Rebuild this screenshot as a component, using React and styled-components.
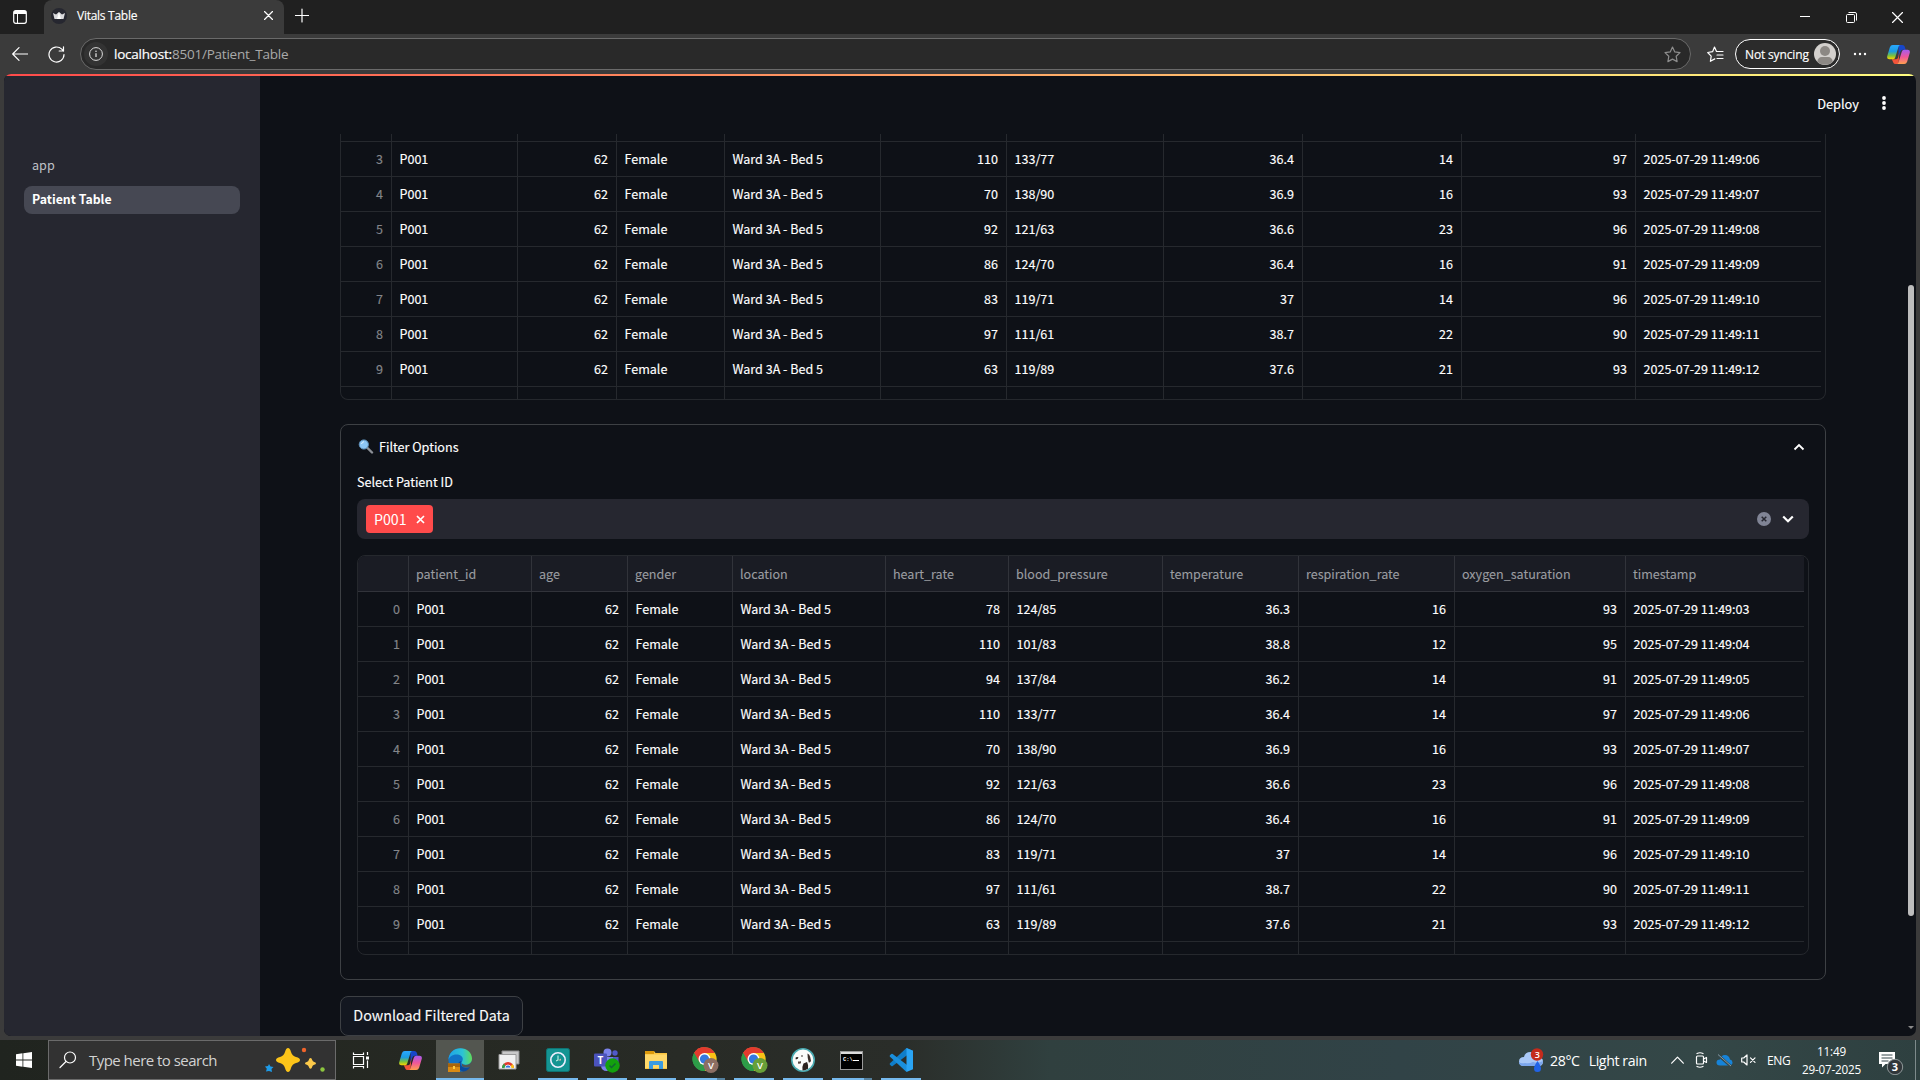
import React from "react";
import styled, { createGlobalStyle } from "styled-components";

const source = '"Noto Sans CJK SC", "Noto Sans CJK JP", "Open Sans", sans-serif';
const segoe = '"Open Sans", "Noto Sans", sans-serif';

const Global = createGlobalStyle`
  *, *::before, *::after { box-sizing: border-box; }
  html, body { margin: 0; padding: 0; background: #3b3b3b; overflow: hidden; }
  svg { display: block; flex: none; }
`;

const Screen = styled.div`
  width: 1920px;
  height: 1080px;
  display: flex;
  flex-direction: column;
  background: #3b3b3b;
  color: #fff;
  font-family: ${segoe};
  overflow: hidden;
`;

/* Browser chrome */
const TitleBar = styled.header`
  height: 34px;
  flex: none;
  display: flex;
  align-items: stretch;
  background: #202020;
`;
const IconBox = styled.div`
  width: ${(p) => p.$w}px;
  display: flex;
  align-items: center;
  justify-content: ${(p) => p.$align || "center"};
  flex: none;
`;
const Tab = styled.div`
  width: 240px;
  display: flex;
  align-items: center;
  padding: 0 8px 3px 7px;
  background: #3b3b3b;
  border-radius: 8px 8px 0 0;
  font-size: 12px;
`;
const TabTitle = styled.span`
  flex: 1;
  padding-left: 10px;
  letter-spacing: -0.27px;
  white-space: nowrap;
  -webkit-text-stroke: 0.15px currentColor;
`;
const Spacer = styled.div`
  flex: 1;
`;
const Toolbar = styled.div`
  height: 40px;
  flex: none;
  display: flex;
  align-items: center;
  padding-right: 5px;
`;
const AddressBar = styled.div`
  width: 1611px;
  height: 32px;
  flex: none;
  display: flex;
  align-items: center;
  padding: 0 9px 0 3px;
  background: #292929;
  border: 1px solid #6a6a6a;
  border-radius: 16px;
`;
const InfoDot = styled.div`
  width: 24px;
  height: 24px;
  border-radius: 50%;
  background: #333;
  display: flex;
  align-items: center;
  justify-content: center;
  margin-right: 6px;
`;
const Url = styled.div`
  flex: 1;
  color: #a9a9a9;
  font-size: 13.5px;
  letter-spacing: -0.22px;
  white-space: nowrap;
`;
const Host = styled.span`
  color: #fff;
  -webkit-text-stroke: 0.2px currentColor;
`;
const Profile = styled.div`
  width: 105px;
  height: 30px;
  flex: none;
  margin-left: 4px;
  border: 1px solid #fff;
  border-radius: 15px;
  background: #2b2b2b;
  display: flex;
  align-items: center;
  justify-content: space-between;
  padding: 0 3px 0 9px;
  font-size: 12px;
  letter-spacing: -0.15px;
  white-space: nowrap;
  -webkit-text-stroke: 0.15px currentColor;
`;

/* Web page */
const Viewport = styled.div`
  height: 962px;
  flex: none;
  margin: 0 4px 4px;
  display: flex;
  flex-direction: column;
  border-radius: 7px;
  overflow: hidden;
  background: #0e1117;
  font-family: ${source};
`;
const Decoration = styled.div`
  height: 2px;
  flex: none;
  background: linear-gradient(90deg, #ff4b4b, #fffd80);
`;
const Page = styled.div`
  flex: 1;
  min-height: 0;
  display: flex;
`;
const Sidebar = styled.nav`
  width: 256px;
  flex: none;
  background: #262730;
  padding: 74px 20px 0;
  display: flex;
  flex-direction: column;
  gap: 8px;
`;
const NavItem = styled.a`
  height: 28px;
  padding: 0 8px ${(p) => (p.$active ? 2 : 0)}px;
  border-radius: 8px;
  display: flex;
  align-items: center;
  font-size: ${(p) => (p.$active ? 12.3 : 12.6)}px;
  font-weight: ${(p) => (p.$active ? 700 : 400)};
  color: ${(p) => (p.$active ? "#fff" : "#bfc0c5")};
  background: ${(p) => (p.$active ? "#464853" : "transparent")};
`;
const Main = styled.main`
  flex: 1;
  min-width: 0;
  display: flex;
  flex-direction: column;
`;
const AppHeader = styled.div`
  height: 58px;
  flex: none;
  display: flex;
  align-items: center;
  justify-content: flex-end;
  padding: 0 16px 4px 0;
  gap: 19px;
  font-size: 12.8px;
  -webkit-text-stroke: 0.15px currentColor;
`;
const Content = styled.div`
  flex: 1;
  min-height: 0;
  width: 1486px;
  margin-left: 80px;
  overflow: hidden;
  display: flex;
  flex-direction: column;
  align-items: flex-start;
`;
const ScrollTrack = styled.div`
  width: 10px;
  flex: none;
  padding-top: 209px;
  display: flex;
  flex-direction: column;
  align-items: center;
`;
const ScrollThumb = styled.div`
  width: 6px;
  height: 631px;
  border-radius: 3px;
  background: #bdbdbd;
`;
const ScrollArrow = styled.div`
  margin-top: 110px;
  border: 3px solid transparent;
  border-top: 3px solid #8a8a8a;
  border-bottom: 0;
`;

/* Data grid */
const Grid = styled.div`
  width: ${(p) => p.$width}px;
  height: ${(p) => p.$height}px;
  flex: none;
  overflow: hidden;
  border: 1px solid #25282d;
  border-top-width: ${(p) => (p.$clipped ? 0 : 1)}px;
  border-radius: ${(p) => (p.$clipped ? "0 0 8px 8px" : "8px")};
  padding-right: 4px;
  font-size: 12.55px;
`;
const Row = styled.div`
  display: grid;
  grid-template-columns: ${(p) => p.$cols};
  height: ${(p) => p.$h || 35}px;
`;
const Cell = styled.div`
  display: flex;
  align-items: center;
  justify-content: ${(p) => (p.$right ? "flex-end" : "flex-start")};
  padding: ${(p) => (p.$head ? "2px 8px 0 7px" : "0 8px 0 7.5px")};
  border-right: ${(p) => (p.$last ? 0 : 1)}px solid ${(p) => (p.$head ? "#31333a" : "#26292e")};
  border-bottom: 1px solid ${(p) => (p.$head ? "#31333a" : "#26292e")};
  color: ${(p) => (p.$head ? "#9b9ca1" : p.$index ? "#84868a" : "#fff")};
  background: ${(p) => (p.$head ? "#1a1c24" : "transparent")};
  line-height: 1;
  white-space: nowrap;
  overflow: hidden;
  -webkit-text-stroke: ${(p) => (p.$head ? 0.1 : 0.15)}px currentColor;
`;

const Expander = styled.section`
  width: 1486px;
  height: 556px;
  flex: none;
  margin-top: 24px;
  border: 1px solid #3d4044;
  border-radius: 8px;
  padding: 0 16px;
`;
const Summary = styled.div`
  height: 46px;
  display: flex;
  align-items: center;
  padding: 0 4px 3px 1px;
  gap: 5px;
  font-size: 12.6px;
  -webkit-text-stroke: 0.15px currentColor;
`;
const Label = styled.div`
  height: 28px;
  display: flex;
  align-items: flex-start;
  font-size: 12.6px;
  line-height: 21px;
  -webkit-text-stroke: 0.15px currentColor;
`;
const Select = styled.div`
  height: 40px;
  margin-bottom: 16px;
  border-radius: 8px;
  background: #262730;
  display: flex;
  align-items: center;
  padding: 0 15px 0 9px;
`;
const Tag = styled.div`
  width: 67px;
  height: 28px;
  border-radius: 4px;
  background: #ff4b4b;
  display: flex;
  align-items: center;
  justify-content: space-between;
  padding: 0 8px;
  font-size: 14.2px;
`;
const Download = styled.button`
  width: 183px;
  height: 40px;
  flex: none;
  margin-top: 16px;
  padding: 0 0 3px;
  border: 1px solid #3d4044;
  border-radius: 8px;
  background: #131720;
  color: #fafafa;
  font-family: inherit;
  font-size: 14.3px;
  -webkit-text-stroke: 0.12px currentColor;
`;

/* Taskbar */
const Taskbar = styled.footer`
  height: 40px;
  flex: none;
  display: flex;
  align-items: stretch;
  background: linear-gradient(90deg, #20241f 0, #262923 460px, #2a2d29 900px, #30403f 1050px, #314347 1400px, #344747 1700px, #2e4040 1920px);
`;
const SearchBox = styled.div`
  width: 288px;
  flex: none;
  border: 1px solid #6b6b6b;
  background: #323232;
  display: flex;
  align-items: center;
  padding: 0 9px 0 10px;
  gap: 12px;
  font-size: 15px;
  color: #d2d2d2;
`;
const SearchText = styled.span`
  flex: 1;
  letter-spacing: -0.53px;
  white-space: nowrap;
`;
const Task = styled.div`
  width: ${(p) => (p.$active ? 48 : 49)}px;
  flex: none;
  display: flex;
  align-items: center;
  justify-content: center;
  background: ${(p) => (p.$active ? "#535650" : "transparent")};
  box-shadow: ${(p) => (p.$active ? "inset 0 -2px #76b9ed" : "none")};
`;
const Running = styled.div`
  width: 40px;
  height: 40px;
  display: flex;
  align-items: center;
  justify-content: center;
  border-bottom: 2px solid transparent;
  border-image: ${(p) =>
    p.$stack
      ? "linear-gradient(90deg, #76b9ed 31px, #55819f 31px) 2"
      : p.$on
      ? "linear-gradient(#76b9ed, #76b9ed) 2"
      : "none"};
  padding-top: 2px;
`;
const Weather = styled.div`
  display: flex;
  align-items: center;
  gap: 6px;
  font-size: 14.2px;
  letter-spacing: -0.4px;
  white-space: nowrap;
  width: 152px;
`;
const WeatherText = styled.span`
  display: flex;
  gap: 9px;
`;
const TrayIcons = styled.div`
  display: flex;
  align-items: center;
  gap: 8px;
  width: 96px;
`;
const Lang = styled.div`
  display: flex;
  align-items: center;
  width: 34px;
  font-size: 12px;
  letter-spacing: -0.4px;
`;
const Clock = styled.div`
  width: 60px;
  display: flex;
  flex-direction: column;
  align-items: center;
  justify-content: center;
  padding-left: 1px;
  font-size: 11.7px;
  line-height: 18px;
  letter-spacing: -0.2px;
  white-space: nowrap;
`;
const Notify = styled.div`
  width: 54px;
  display: flex;
  align-items: center;
  padding: 3px 0 0 17px;
`;
const DesktopEdge = styled.div`
  width: 5px;
  border-left: 1px solid #7d8a8b;
`;

const stroke = { fill: "none", stroke: "#fff", strokeWidth: 1.2, strokeLinecap: "round", strokeLinejoin: "round" };

const CopilotIcon = ({ size = 22, id }) => (
  <svg width={size} height={size} viewBox="0 0 24 24">
    <defs>
      <linearGradient id={id + "a"} x1="0" y1="0" x2="0" y2="1">
        <stop offset="0" stopColor="#2aa8ff" />
        <stop offset=".45" stopColor="#1b9de0" />
        <stop offset=".75" stopColor="#7bc23c" />
        <stop offset="1" stopColor="#ffd400" />
      </linearGradient>
      <linearGradient id={id + "b"} x1="0" y1="0" x2="0" y2="1">
        <stop offset="0" stopColor="#a45cf0" />
        <stop offset=".5" stopColor="#f0569a" />
        <stop offset="1" stopColor="#ffa04d" />
      </linearGradient>
    </defs>
    <path d="M12 2h4q2 0 2.600 2L19.500 7h-3q-2 0-2.600 2L12 14z" fill="#1746c9" />
    <path d="M12 22H9q-2 0-2.600-2L5 17h4q2 0 2.600-2L13 9z" fill="#f2543a" />
    <path d="M6 2h8q-1.500 0-2 2L8.600 15q-.6 2-2.600 2H2.500Q-.6 17 .3 13.500L3 4.500Q3.800 2 6 2z" fill={`url(#${id}a)`} />
    <path d="M18 22h-8q1.500 0 2-2l3.400-11q.6-2 2.600-2h3.500q3.100 0 2.200 3.500L21 19.500q-.8 2.500-3 2.500z" fill={`url(#${id}b)`} />
  </svg>
);

const EdgeIcon = () => (
  <svg width="24" height="24" viewBox="0 0 24 24">
    <defs>
      <linearGradient id="edgeTop" x1="0" x2="1">
        <stop offset="0" stopColor="#1fa3e8" />
        <stop offset=".6" stopColor="#2cc3d5" />
        <stop offset="1" stopColor="#5fdc5a" />
      </linearGradient>
    </defs>
    <circle cx="12" cy="12" r="11.500" fill="#1173c7" />
    <path d="M.5 12C.5 5 6 .3 12.500.3 19 .3 24 5 24 10.500c0 4-3 6.300-6.500 6.300-2.700 0-4-1-4-2.200 0-1 1.300-1.500 1.300-3.600C14.800 8.500 12 6.500 8.500 6.500 4 6.500 1 9 .5 12z" fill="url(#edgeTop)" />
    <path d="M13.500 13q-2 3 .5 5.500 3 2.500 8 .5-3 4.500-7 4.500-5-1.500-5-6.500 0-3.500 3.500-4z" fill="#0b4a9c" />
    <path d="M14 13.500q-.8 3.300 3.500 3.500 4.500 0 6-3.500l1 3-3 2.500q-5 1.500-7.500-1z" fill="#535650" />
    <path d="M0 15.500h12v8.500H0z" fill="#d98a14" />
    <path d="M0 15.500h12v3.500H0z" fill="#a8640c" />
    <path d="M5 18h2v3H5z" fill="#ffc93c" />
  </svg>
);

const ChromeMark = () => (
  <g transform="translate(1 1)">
    <circle cx="12" cy="12" r="12" fill="#34a04a" />
    <path d="M1.600 6A12 12 0 0 1 22.400 6H12z" fill="#e33b2e" />
    <path d="M1.600 6A12 12 0 0 1 12 0l2 6-6.500 10.500z" fill="#e33b2e" />
    <path d="M12 6h10.400A12 12 0 0 1 12 24l5.200-9z" fill="#fbc116" />
    <path d="M1.600 6L6.800 15l5.200 3 2 3-2 3A12 12 0 0 1 1.600 6z" fill="#2d9c48" />
    <circle cx="12" cy="12" r="6" fill="#fff" />
    <circle cx="12" cy="12" r="4.600" fill="#3478e0" />
  </g>
);

const ChromeProfile = ({ color }) => (
  <svg width="28" height="28" viewBox="-0.5 0 28 28">
    <ChromeMark />
    <circle cx="19.500" cy="19.500" r="7.500" fill={color} />
    <text x="19.500" y="23" textAnchor="middle" fontSize="9.500" fontWeight="600" fill="#fff" fontFamily="Open Sans">V</text>
  </svg>
);

const COLS_A = "51px 126px 99px 108px 156px 126px 157px 139px 159px 174px 185px";
const COLS_B = "51px 123px 96px 105px 153px 123px 154px 136px 156px 171px 178px";

const HEADERS = ["", "patient_id", "age", "gender", "location", "heart_rate", "blood_pressure", "temperature", "respiration_rate", "oxygen_saturation", "timestamp"];
const VITALS = [
  [78, "124/85", "36.3", 16, 93],
  [110, "101/83", "38.8", 12, 95],
  [94, "137/84", "36.2", 14, 91],
  [110, "133/77", "36.4", 14, 97],
  [70, "138/90", "36.9", 16, 93],
  [92, "121/63", "36.6", 23, 96],
  [86, "124/70", "36.4", 16, 91],
  [83, "119/71", "37", 14, 96],
  [97, "111/61", "38.7", 22, 90],
  [63, "119/89", "37.6", 21, 93],
];
const ROWS = VITALS.map(([hr, bp, t, rr, ox], i) => [
  i, "P001", 62, "Female", "Ward 3A - Bed 5", hr, bp, t, rr, ox,
  `2025-07-29 11:49:${String(i + 3).padStart(2, "0")}`,
]);
const RIGHT = new Set([0, 2, 5, 7, 8, 9]);

const GridRow = ({ values, cols, h, head }) => (
  <Row $cols={cols} $h={h}>
    {values.map((v, i) => (
      <Cell key={i} $right={!head && RIGHT.has(i)} $index={i === 0} $head={head} $last={i === 10}>
        {v}
      </Cell>
    ))}
  </Row>
);
const EMPTY = HEADERS.map(() => "");

const TASKS = [
  {
    id: "remote",
    icon: (
      <svg width="22" height="20" viewBox="0 0 22 20">
        <path d="M4 1h17v13H4z" fill="#c9c9c9" stroke="#8a8a8a" />
        <path d="M1 4.500h17V19H1z" fill="#f1f1f1" stroke="#9b9b9b" />
        <path d="M4 18a6 6 0 0 1 12 0z" fill="#e33b2e" />
        <path d="M4 18a6 6 0 0 1 2-4.500L9 18z" fill="#34a04a" />
        <path d="M16 18a6 6 0 0 0-1.500-4L11 18z" fill="#fbc116" />
        <path d="M7 18a3 3 0 0 1 6 0z" fill="#3478e0" stroke="#fff" strokeWidth=".8" />
      </svg>
    ),
  },
  {
    id: "timer",
    on: true,
    icon: (
      <svg width="24" height="24" viewBox="0 0 24 24">
        <rect x=".5" y=".5" width="23" height="23" rx="2" fill="#149493" stroke="#0e7473" />
        <circle cx="12" cy="12" r="7.200" fill="none" stroke="#eef" strokeWidth="1.600" />
        <path d="M12 7.500V12l-2 1" fill="none" stroke="#cfe" strokeWidth="1" />
        <path d="M12 12.500h3v-2z" fill="#e6b8a8" />
      </svg>
    ),
  },
  {
    id: "teams",
    on: true,
    icon: (
      <svg width="26" height="25" viewBox="0 0 26 25">
        <circle cx="13.500" cy="4.500" r="4" fill="#7b83eb" />
        <circle cx="21" cy="5" r="2.700" fill="#5059c9" />
        <path d="M16 9h8.500v6q0 5-5 5H16z" fill="#5059c9" />
        <path d="M7 9h12v8q0 6-6 6t-6-6z" fill="#7b83eb" />
        <rect x="0" y="5.500" width="13" height="13" rx="1" fill="#4b53bc" />
        <text x="6.500" y="15.500" textAnchor="middle" fontSize="10" fontWeight="700" fill="#fff" fontFamily="Open Sans">T</text>
        <circle cx="18.500" cy="17.500" r="7.200" fill="#13a10e" />
        <path d="M15.500 17.500l2 2 4-4" fill="none" stroke="#163" strokeWidth="1.500" />
      </svg>
    ),
  },
  {
    id: "files",
    on: true,
    icon: (
      <svg width="22" height="20" viewBox="0 0 22 20">
        <path d="M0 1h9l1.500 2H22v16H0z" fill="#f9c440" />
        <path d="M0 1h9v3H0z" fill="#dd9a0c" />
        <path d="M0 4.500h22V18H0z" fill="#ffd869" />
        <path d="M4 19v-7q0-1 1-1h12q1 0 1 1v7h-4v-4H8v4z" fill="#3c9be0" />
      </svg>
    ),
  },
  { id: "chrome1", on: true, stack: true, icon: <ChromeProfile color="#8d6e63" /> },
  { id: "chrome2", on: true, icon: <ChromeProfile color="#689f38" /> },
  {
    id: "dbeaver",
    on: true,
    icon: (
      <svg width="24" height="24" viewBox="0 0 24 24">
        <circle cx="12" cy="12" r="11.200" fill="#fbfbfa" stroke="#48a9b0" strokeWidth="1.600" />
        <path d="M16.500 5.500q2 .5 2.700 3.500l.8 4q-1 2-2.300 1.200Q16.500 11 16.500 5.500z" fill="#3a2d28" />
        <path d="M12.500 15.500l3.500-1.500q1.800 3 1 6.800-2.500 1.700-5.500 1.600-.8-3 1-6.900z" fill="#2b211e" />
        <path d="M4.500 9.800q1.500-1.300 3-.3-.2 1.800-2.700 1.900z" fill="#2b211e" />
        <path d="M7 13.500q1.800.3 3-.5v2.200q-1.500.8-3 .3z" fill="#5a4a44" />
        <circle cx="11" cy="8" r=".8" fill="#2b211e" />
      </svg>
    ),
  },
  {
    id: "terminal",
    on: true,
    stack: true,
    icon: (
      <svg width="23" height="19" viewBox="0 0 23 19">
        <rect x=".5" y=".5" width="22" height="18" fill="#000" stroke="#9a9a9a" />
        <path d="M1 1h21v2H1z" fill="#dcdcdc" />
        <text x="3" y="9.500" fontSize="5.500" fontWeight="700" fill="#fff" fontFamily="Liberation Mono">C:\</text>
        <path d="M13 9.500h6" stroke="#fff" />
      </svg>
    ),
  },
  {
    id: "code",
    on: true,
    icon: (
      <svg width="24" height="24" viewBox="0 0 24 24">
        <path d="M17.500 0L1 15.300q-.7.700 0 1.500l1.300 1.200q.7.500 1.400 0L24 2.800z" fill="#0f7dc9" />
        <path d="M17.500 24L1 8.700q-.7-.7 0-1.500L2.300 6q.7-.5 1.400 0L20 18.500z" fill="#1a8fdd" />
        <path d="M17.500 0L24 2.800v18.400L17.500 24z" fill="#2aa4f4" />
      </svg>
    ),
  },
];

export default function App() {
  return (
    <Screen>
      <Global />
      <TitleBar>
        <IconBox $w={40}>
          <svg width="14" height="14" viewBox="0 0 14 14">
            <rect x=".7" y=".7" width="12.600" height="12.600" rx="2" fill="none" stroke="#fff" strokeWidth="1.200" />
            <path d="M1 1h12v3H1z" fill="#fff" />
            <path d="M4.500 4v9" stroke="#fff" />
          </svg>
        </IconBox>
        <IconBox $w={4} />
        <Tab>
          <svg width="16" height="16" viewBox="0 0 16 16">
            <circle cx="8" cy="8" r="8" fill="#262730" />
            <path d="M2 5l3 1.500L8 4l3 2.500L14 5l-1.500 6h-9z" fill="#d9d9dc" />
            <path d="M8 4l2 7H6z" fill="#fff" />
          </svg>
          <TabTitle>Vitals Table</TabTitle>
          <IconBox $w={16}>
            <svg width="9" height="9" viewBox="0 0 9 9"><path d="M.5.5l8 8M8.500.5l-8 8" {...stroke} /></svg>
          </IconBox>
        </Tab>
        <IconBox $w={35}>
          <svg width="14" height="18" viewBox="0 0 14 18"><path d="M7 1v13M.5 7.500h13" {...stroke} /></svg>
        </IconBox>
        <Spacer />
        <IconBox $w={46}>
          <svg width="10" height="10" viewBox="0 0 10 10"><path d="M0 4.500h10" stroke="#fff" /></svg>
        </IconBox>
        <IconBox $w={46}>
          <svg width="11" height="11" viewBox="0 0 11 11">
            <rect x=".5" y="2.500" width="8" height="8" rx="1" fill="none" stroke="#fff" />
            <path d="M2.500.5H9Q10.500.5 10.500 2v6.500" fill="none" stroke="#fff" />
          </svg>
        </IconBox>
        <IconBox $w={46}>
          <svg width="11" height="11" viewBox="0 0 11 11"><path d="M.5.500l10 10M10.500.5l-10 10" {...stroke} /></svg>
        </IconBox>
      </TitleBar>

      <Toolbar>
        <IconBox $w={40}>
          <svg width="16" height="14" viewBox="0 0 16 14"><path d="M15.500 7H.7M7 .7L.7 7 7 13.300" {...stroke} /></svg>
        </IconBox>
        <IconBox $w={32}>
          <svg width="17" height="17" viewBox="0 0 17 17">
            <path d="M16 8.500a7.500 7.500 0 1 1-2.200-5.300L15.500 5M15.500.8V5h-4.300" {...stroke} />
          </svg>
        </IconBox>
        <IconBox $w={8} />
        <AddressBar>
          <InfoDot>
            <svg width="14" height="14" viewBox="0 0 14 14">
              <circle cx="7" cy="7" r="6.400" fill="none" stroke="#ddd" />
              <path d="M7 6.200V10" stroke="#ddd" strokeWidth="1.300" />
              <circle cx="7" cy="4.200" r=".8" fill="#ddd" />
            </svg>
          </InfoDot>
          <Url><Host>localhost:</Host>8501/Patient_Table</Url>
          <svg width="17" height="17" viewBox="0 0 17 17">
            <path d="M8.500 1l2.300 4.900 5.200.7-3.800 3.700.9 5.300-4.600-2.500-4.600 2.500.9-5.300L1 6.600l5.200-.7z" {...stroke} stroke="#8d8d8d" />
          </svg>
        </AddressBar>
        <IconBox $w={40} $align="flex-end">
          <svg width="24" height="17" viewBox="0 0 24 17">
            <path d="M9.500 5.500L7.500 1 5.600 5.700.7 6.500l3.500 3.600-.8 5.200 4.400-2.400M9.500 5.500H16M10 9h6M10 12.500h6" {...stroke} />
          </svg>
        </IconBox>
        <Profile>
          Not syncing
          <svg width="22" height="22" viewBox="0 0 22 22">
            <circle cx="11" cy="11" r="11" fill="#d3d0cd" />
            <circle cx="11" cy="8" r="5" fill="#8c8884" />
            <path d="M3.200 18.500q1-4.500 4.500-4.500h6.600q3.500 0 4.500 4.500A11 11 0 0 1 3.200 18.500z" fill="#8c8884" />
          </svg>
        </Profile>
        <IconBox $w={40}>
          <svg width="14" height="4" viewBox="0 0 14 4">
            <circle cx="2" cy="2" r="1.200" fill="#fff" /><circle cx="7" cy="2" r="1.200" fill="#fff" /><circle cx="12" cy="2" r="1.200" fill="#fff" />
          </svg>
        </IconBox>
        <IconBox $w={36}><CopilotIcon id="cpa" size={23} /></IconBox>
      </Toolbar>

      <Viewport>
        <Decoration />
        <Page>
          <Sidebar>
            <NavItem>app</NavItem>
            <NavItem $active>Patient Table</NavItem>
          </Sidebar>
          <Main>
            <AppHeader>
              Deploy
              <IconBox $w={12}>
                <svg width="4" height="14" viewBox="0 0 4 14">
                  <circle cx="2" cy="2" r="1.900" fill="#fff" /><circle cx="2" cy="7" r="1.900" fill="#fff" /><circle cx="2" cy="12" r="1.900" fill="#fff" />
                </svg>
              </IconBox>
            </AppHeader>
            <Content>
              <Grid $width={1486} $height={266} $clipped>
                <GridRow values={EMPTY} cols={COLS_A} h={8} />
                {ROWS.slice(3).map((r) => <GridRow key={r[0]} values={r} cols={COLS_A} />)}
                <GridRow values={EMPTY} cols={COLS_A} />
              </Grid>
              <Expander>
                <Summary>
                  <svg width="16" height="15" viewBox="0 0 16 15">
                    <path d="M9 8.500l5 5" stroke="#8b8f96" strokeWidth="2.400" strokeLinecap="round" />
                    <circle cx="5.800" cy="5.500" r="4.600" fill="#8cc6f5" stroke="#5e8fb8" />
                    <path d="M3.500 5q.5-2 2.500-2.300" stroke="#e3f3ff" fill="none" />
                  </svg>
                  Filter Options
                  <Spacer />
                  <svg width="12" height="8" viewBox="0 0 12 8"><path d="M1.500 6.500L6 2l4.500 4.500" fill="none" stroke="#fff" strokeWidth="1.800" /></svg>
                </Summary>
                <Label>Select Patient ID</Label>
                <Select>
                  <Tag>
                    P001
                    <svg width="9" height="9" viewBox="0 0 9 9"><path d="M1 1l7 7M8 1L1 8" stroke="#fff" strokeWidth="1.700" /></svg>
                  </Tag>
                  <Spacer />
                  <svg width="14" height="14" viewBox="0 0 14 14">
                    <circle cx="7" cy="7" r="7" fill="#808495" />
                    <path d="M4.700 4.700l4.600 4.600M9.300 4.700L4.700 9.300" stroke="#262730" strokeWidth="1.500" />
                  </svg>
                  <IconBox $w={11} />
                  <svg width="12" height="8" viewBox="0 0 12 8"><path d="M1.200 1.500L6 6.200l4.800-4.700" fill="none" stroke="#fff" strokeWidth="2.200" /></svg>
                </Select>
                <Grid $width={1452} $height={400}>
                  <GridRow values={HEADERS} cols={COLS_B} h={36} head />
                  {ROWS.map((r) => <GridRow key={r[0]} values={r} cols={COLS_B} />)}
                  <GridRow values={EMPTY} cols={COLS_B} />
                </Grid>
              </Expander>
              <Download>Download Filtered Data</Download>
            </Content>
          </Main>
          <ScrollTrack>
            <ScrollThumb />
            <ScrollArrow />
          </ScrollTrack>
        </Page>
      </Viewport>

      <Taskbar>
        <IconBox $w={48}>
          <svg width="16" height="16" viewBox="0 0 16 16">
            <path d="M0 2.200l6.500-.9v6.300H0zM7.300 1.200L16 0v7.600H7.300zM0 8.400h6.500v6.300L0 13.800zM7.300 8.400H16V16l-8.700-1.200z" fill="#fff" />
          </svg>
        </IconBox>
        <SearchBox>
          <svg width="18" height="18" viewBox="0 0 18 18">
            <circle cx="11" cy="6.500" r="5.500" {...stroke} /><path d="M7 10.500L1 16.500" {...stroke} />
          </svg>
          <SearchText>Type here to search</SearchText>
          <svg width="62" height="26" viewBox="0 0 62 26">
            <path d="M24 1q2 0 3 4 1.200 4 5 5 4 1 4 3t-4 3q-3.800 1-5 5-1 4-3 4t-3-4q-1.200-4-5-5-4-1-4-3t4-3q3.800-1 5-5 1-4 3-4z" fill="#fcc419" />
            <path d="M46.500 11q1.300 0 1.700 2 .5 1.500 2 2 1.800.4 1.800 1.400t-1.800 1.300q-1.700.5-2 2-.4 2-1.700 2t-1.700-2q-.5-1.500-2-2-1.800-.3-1.800-1.300t1.800-1.400q1.700-.5 2-2 .4-2 1.700-2z" fill="#fcc94a" />
            <path d="M5 17l1.500 2.500 3 .5-2 2 .5 3-3-1-3 .5.800-2.800L1 19.500l3-.5z" fill="#1e9be8" />
            <circle cx="40" cy="3" r="2.200" fill="#f0642b" />
            <circle cx="58.500" cy="22.500" r="2.200" fill="#8cc63f" />
          </svg>
        </SearchBox>
        <IconBox $w={49}>
          <svg width="18" height="17" viewBox="0 0 18 17">
            <path d="M1.500 4.500h10v8h-10zM1.500.5v2h10v-2M1.500 16.500v-2h10v2M15.500 0v3M15.500 8.500V16" fill="none" stroke="#fff" strokeWidth="1.200" />
            <path d="M14 4.500h3v3h-3z" fill="#fff" />
          </svg>
        </IconBox>
        <IconBox $w={51}><CopilotIcon id="cpb" size={23} /></IconBox>
        <Task $active><EdgeIcon /></Task>
        {TASKS.map((t) => (
          <Task key={t.id}><Running $on={t.on} $stack={t.stack}>{t.icon}</Running></Task>
        ))}
        <Spacer />
        <Weather>
          <svg width="25" height="25" viewBox="0 0 25 25">
            <path d="M5 18q-5 0-5-4.500T5 9q1-5 6.500-5t7 5Q24 9 24 13.500T19.500 18z" fill="#a9c8f7" />
            <path d="M5 18q-5 0-5-4 2 2 6 1 4 1 8-1 5 2 10-1-.5 5-4.500 5z" fill="#7ba6ec" />
            <path d="M18.500 13q3.500 5 3.500 7.500a3.500 3.500 0 0 1-7 0Q15 18 18.500 13z" fill="#2163e6" />
            <circle cx="18" cy="6.500" r="6.200" fill="#c42b1c" />
            <text x="18" y="10" textAnchor="middle" fontSize="9" fontWeight="600" fill="#fff" fontFamily="Open Sans">3</text>
          </svg>
          <WeatherText><span>28°C</span><span>Light rain</span></WeatherText>
        </Weather>
        <TrayIcons>
          <IconBox $w={16} $align="flex-start">
            <svg width="13" height="8" viewBox="0 0 13 8"><path d="M.7 7.200L6.500 1.200l5.800 6" {...stroke} /></svg>
          </IconBox>
          <svg width="13" height="16" viewBox="0 0 13 16">
            <rect x="1.500" y="4" width="7" height="8" rx="1" {...stroke} />
            <path d="M8.500 7l3-1.500v5L8.500 9M2 1.500q3-1.500 6 0M2 14.500q3 1.500 6 0" {...stroke} />
          </svg>
          <svg width="17" height="13" viewBox="0 0 17 13">
            <path d="M4 11.500Q.5 11.500.5 8.500T4 5.500Q5 1 9 1t5 4.500q2.500.5 2.500 3t-3 3z" fill="#1683d8" />
            <path d="M2 1l13 11.500" stroke="#34474a" strokeWidth="2.500" /><path d="M2 .5l13 11.500" stroke="#8fa3ad" strokeWidth=".9" />
          </svg>
          <svg width="15" height="12" viewBox="0 0 15 12">
            <path d="M.7 4h2L6 1v10L2.700 8h-2zM9.500 3.800l4.500 4.500M14 3.800L9.500 8.300" {...stroke} />
          </svg>
        </TrayIcons>
        <Lang>ENG</Lang>
        <Clock><span>11:49</span><span>29-07-2025</span></Clock>
        <Notify>
          <svg width="26" height="26" viewBox="0 0 26 26">
            <path d="M1 3h16v12H7.500L4 18.500V15H1z" fill="#fff" />
            <path d="M3.500 6h11M3.500 9h11M3.500 12h7" stroke="#34474a" />
            <circle cx="17" cy="18" r="7.700" fill="#30363a" stroke="#8f9899" />
            <text x="17" y="22" textAnchor="middle" fontSize="11" fontWeight="700" fill="#fff" fontFamily="Open Sans">3</text>
          </svg>
        </Notify>
        <DesktopEdge />
      </Taskbar>
    </Screen>
  );
}
